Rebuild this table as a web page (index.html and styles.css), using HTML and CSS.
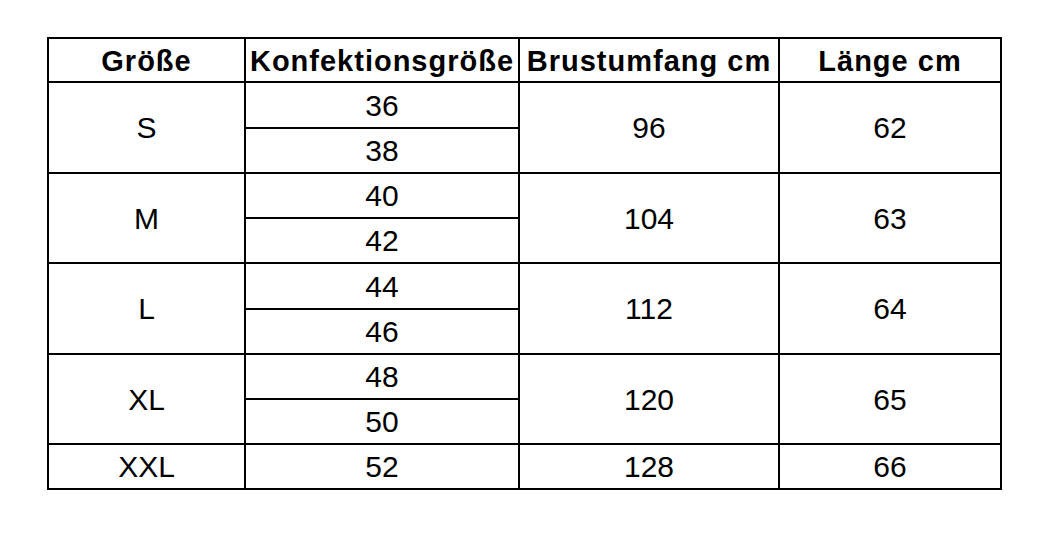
FILE: index.html
```html
<!DOCTYPE html>
<html lang="de">
<head>
<meta charset="utf-8">
<title>Größentabelle</title>
<link rel="stylesheet" href="styles.css">
</head>
<body>
<div class="page">
  <div class="table" role="table">
    <div class="cell head" role="columnheader">Größe</div>
    <div class="cell head" role="columnheader">Konfektionsgröße</div>
    <div class="cell head" role="columnheader">Brustumfang cm</div>
    <div class="cell head last-col" role="columnheader">Länge cm</div>

    <div class="cell span2">S</div>
    <div class="cell">36</div>
    <div class="cell span2">96</div>
    <div class="cell span2 last-col">62</div>
    <div class="cell">38</div>

    <div class="cell span2">M</div>
    <div class="cell">40</div>
    <div class="cell span2">104</div>
    <div class="cell span2 last-col">63</div>
    <div class="cell">42</div>

    <div class="cell span2">L</div>
    <div class="cell">44</div>
    <div class="cell span2">112</div>
    <div class="cell span2 last-col">64</div>
    <div class="cell">46</div>

    <div class="cell span2">XL</div>
    <div class="cell">48</div>
    <div class="cell span2">120</div>
    <div class="cell span2 last-col">65</div>
    <div class="cell">50</div>

    <div class="cell">XXL</div>
    <div class="cell">52</div>
    <div class="cell">128</div>
    <div class="cell last-col">66</div>
  </div>
</div>
</body>
</html>
```
FILE: styles.css
```css
html, body {
  margin: 0;
  padding: 0;
  background: #fff;
}

.page {
  padding: 37px 0 0 47px;
}

.table {
  display: grid;
  grid-template-columns: 197px 274px 260px 222px;
  grid-template-rows: 44px 46px 45px 45px 45px 46px 45px 45px 45px 45px;
  width: max-content;
  border-left: 2px solid #000;
  border-top: 2px solid #000;
  font-family: "Liberation Sans", Arial, sans-serif;
  color: #000;
}

.cell {
  box-sizing: border-box;
  border-right: 2px solid #000;
  border-bottom: 2px solid #000;
  display: flex;
  align-items: center;
  justify-content: center;
  font-size: 30px;
  line-height: 1;
  padding-top: 1px;
  white-space: nowrap;
}

.head {
  font-weight: bold;
  font-size: 29px;
  letter-spacing: 1px;
  padding-top: 2px;
}

.span2 {
  grid-row: span 2;
}
```
